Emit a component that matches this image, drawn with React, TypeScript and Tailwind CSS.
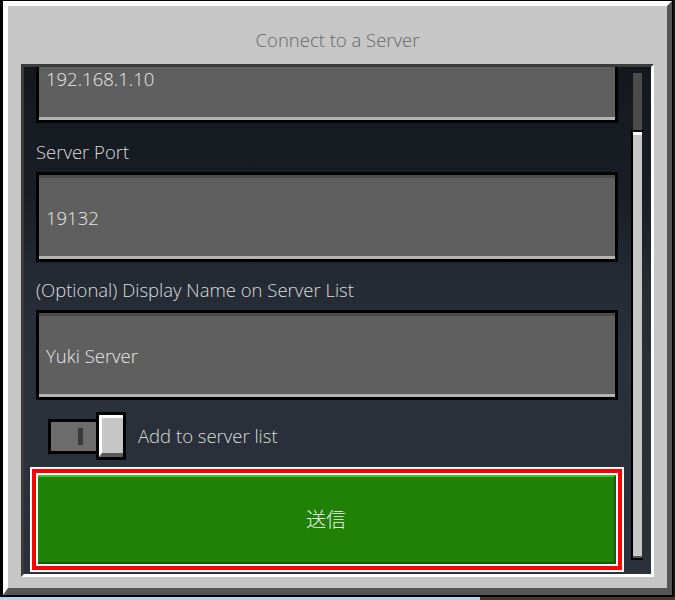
import React from "react";

const font = { fontFamily: '"Open Sans", "Noto Sans", "Noto Sans CJK JP", sans-serif' };

function Field({ value }: { value: string }) {
  return (
    <div className="h-[90px] w-[582px] shrink-0 border-[3px] border-black">
      <div className="flex h-full items-center border-t-[3px] border-b-[3px] border-t-[#4b4b4b] border-b-[#b4b4b4] bg-[#5f5f5f] pl-[7px] pt-[1px] text-[18.5px] font-light leading-[20px] text-[#e8e8e8]">
        {value}
      </div>
    </div>
  );
}

export default function App() {
  return (
    <div className="flex h-[600px] w-[675px] flex-col bg-[#2a2a2a]" style={font}>
      <div className="flex h-[597px]">
        <div className="h-[597px] w-[673px] bg-black pb-[2px] pl-[3px] pr-px pt-px">
          <div className="flex h-full flex-col border-b-[7px] border-l-[5px] border-r-[5px] border-t-[5px] border-b-[#555555] border-l-white border-r-[#555555] border-t-white bg-[#c6c6c6] px-[13px] pb-[11px]">
            <div className="h-[58px] shrink-0 pt-[24px] text-center text-[18.5px] font-light leading-[20px] text-[#666666]">
              Connect to a Server
            </div>
            <div className="flex h-[513px] border-b-[3px] border-l-[3px] border-r-[3px] border-t-[3px] border-b-white border-l-[#3b3b3b] border-r-white border-t-[#3b3b3b] bg-[linear-gradient(180deg,#14181e_0%,#191d25_25%,#242b35_42%,#29303a_58%,#2a313b_100%)]">
              <div className="w-[607px] shrink-0 overflow-hidden pl-[12px] pr-[13px]">
                <div className="-mt-[34px] flex flex-col">
                  <Field value="192.168.1.10" />
                  <div className="mb-[10px] mt-[19px] h-[20px] text-[18.5px] font-light leading-[20px] text-[#dcdcdc]">Server Port</div>
                  <Field value="19132" />
                  <div className="mb-[10px] mt-[18px] h-[20px] text-[18.5px] font-light leading-[20px] text-[#dcdcdc]">
                    (Optional) Display Name on Server List
                  </div>
                  <Field value="Yuki Server" />
                  <div className="mt-[12px] flex h-[48px] items-center pl-[12px]">
                    <div className="flex h-[35px] w-[52px] items-center border-[3px] border-black bg-[#6c6c6c] pl-[27px]">
                      <div className="h-[17px] w-[5px] bg-[#3a3a3a]" />
                    </div>
                    <div className="-ml-[4px] h-[48px] w-[30px] border-[3px] border-black">
                      <div className="h-full border-b-[4px] border-l-[3px] border-t-[3px] border-b-[#5a5a5a] border-l-white border-t-white bg-[#c6c6c6]" />
                    </div>
                    <div className="ml-[12px] text-[18.5px] font-light leading-[20px] text-[#dcdcdc]">Add to server list</div>
                  </div>
                  <div className="-mx-[6px] mt-[7px] h-[105px] shrink-0 border-2 border-white">
                    <div className="h-full border-[4px] border-[#ff0000]">
                      <div className="h-full border-2 border-white">
                        <div className="flex h-full items-center justify-center border-b-[2px] border-r-[2px] border-t-[2px] border-b-[#135a09] border-r-[#135a09] border-t-[#32c232] bg-[#1f8105] text-[20px] font-light leading-[24px] text-[#f0f0f0]">
                          送信
                        </div>
                      </div>
                    </div>
                  </div>
                </div>
              </div>
              <div className="flex w-[12px] shrink-0 flex-col pb-[14px] pt-[6px]">
                <div className="ml-[2px] h-[57px] w-[9px] bg-[#4b4b4b]" />
                <div className="flex-1 border-b-[2px] border-l-[2px] border-t-[2px] border-black">
                  <div className="h-full w-[9px] border-b-[2px] border-t-[3px] border-b-[#555555] border-t-white bg-[#c6c6c6]" />
                </div>
              </div>
            </div>
          </div>
        </div>
        <div className="w-[2px] bg-[#1a1410]" />
      </div>
      <div className="flex h-[3px]">
        <div className="w-[480px] bg-[#b8d3f1]" />
        <div className="flex-1 bg-[#4a3422]" />
      </div>
    </div>
  );
}
